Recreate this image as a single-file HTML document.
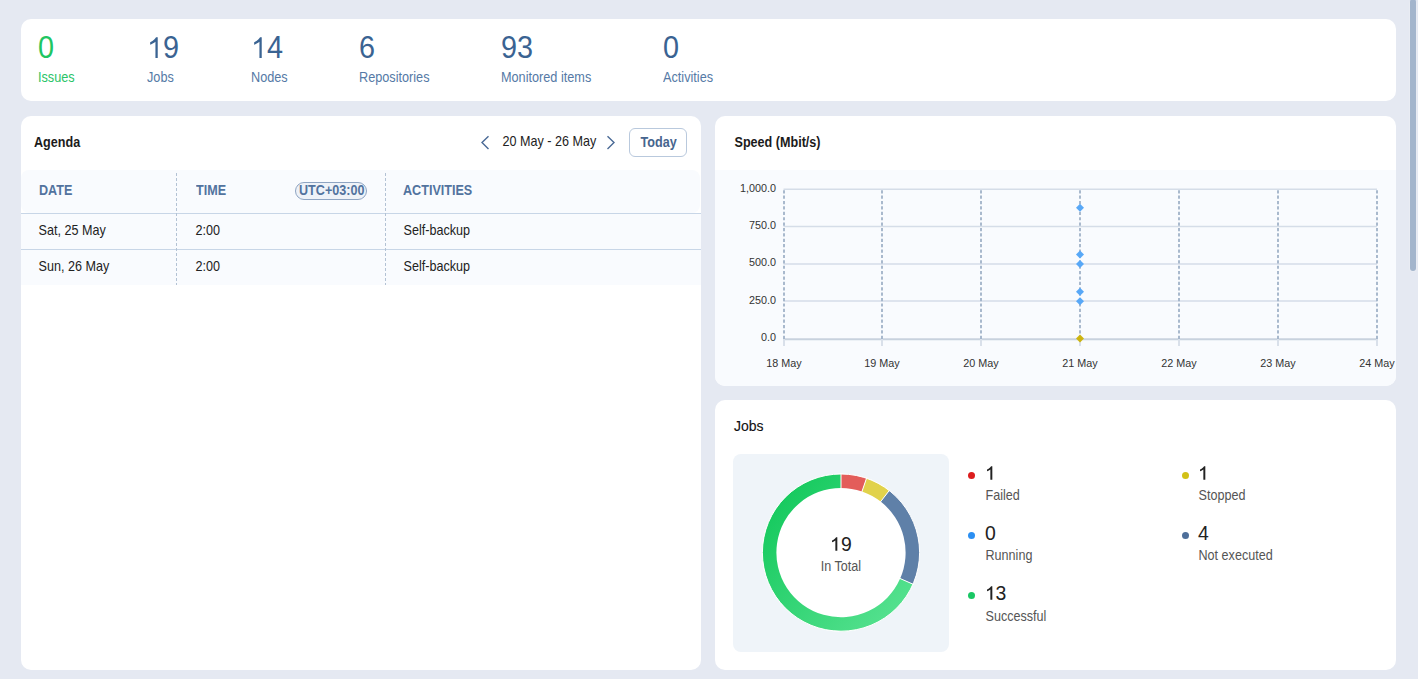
<!DOCTYPE html>
<html>
<head>
<meta charset="utf-8">
<style>
html,body{margin:0;padding:0;}
body{width:1418px;height:679px;overflow:hidden;background:#e5e9f2;font-family:"Liberation Sans",sans-serif;position:relative;}
.a{position:absolute;white-space:nowrap;line-height:1;}
.card{position:absolute;background:#fff;border-radius:10px;overflow:hidden;}
.num{font-size:28.8px;color:#3a6392;transform:scaleY(1.06);transform-origin:0 4.6px;}
.lbl{font-size:12.7px;color:#557aa6;}
.ttl{font-size:12.6px;font-weight:bold;color:#1b1b1b;}
.th{font-size:12.6px;font-weight:bold;color:#52739e;}
.td{font-size:12.6px;color:#222;}
.ax{font-size:10.8px;color:#333;}
.lnum{font-size:19.4px;color:#222;}
.llbl{font-size:12.6px;color:#555;}
.sy{transform:scaleY(1.09);transform-origin:0 2px;}
.one{position:relative;color:transparent;}
.one svg{position:absolute;left:0;top:0;width:100%;height:100%;overflow:visible;}
.dot{position:absolute;width:7px;height:7px;border-radius:50%;margin-top:0px;}
</style>
</head>
<body>
<!-- scrollbar -->
<div style="position:absolute;left:1409px;top:0;width:8px;height:272px;background:#e9ecf3;border-radius:4px;"></div>
<div style="position:absolute;left:1410px;top:-1px;width:6px;height:272px;border-radius:3px;background:#a3b5cc;"></div>

<!-- top stats card -->
<div class="card" style="left:21px;top:19px;width:1375px;height:82px;"></div>
<div class="a num" style="left:38px;top:32.8px;color:#1fc662;">0</div>
<div class="a lbl sy" style="left:38px;top:70.9px;color:#2ac468;">Issues</div>
<div class="a num" style="left:147px;top:32.8px;"><span class="one">1<svg viewBox="0 -1854 1139 2288" preserveAspectRatio="none"><path d="M763 0L600 0L600 -1105Q515 -1035 405 -980Q305 -930 225 -902L225 -1062Q400 -1145 515 -1262Q605 -1345 645 -1409L763 -1409Z" fill="#3a6392"/></svg></span>9</div>
<div class="a lbl sy" style="left:147px;top:70.9px;">Jobs</div>
<div class="a num" style="left:251px;top:32.8px;"><span class="one">1<svg viewBox="0 -1854 1139 2288" preserveAspectRatio="none"><path d="M763 0L600 0L600 -1105Q515 -1035 405 -980Q305 -930 225 -902L225 -1062Q400 -1145 515 -1262Q605 -1345 645 -1409L763 -1409Z" fill="#3a6392"/></svg></span>4</div>
<div class="a lbl sy" style="left:251px;top:70.9px;">Nodes</div>
<div class="a num" style="left:359px;top:32.8px;">6</div>
<div class="a lbl sy" style="left:359px;top:70.9px;">Repositories</div>
<div class="a num" style="left:501px;top:32.8px;">93</div>
<div class="a lbl sy" style="left:501px;top:70.9px;">Monitored items</div>
<div class="a num" style="left:663px;top:32.8px;">0</div>
<div class="a lbl sy" style="left:663px;top:70.9px;">Activities</div>

<!-- agenda card -->
<div class="card" style="left:21px;top:116px;width:680px;height:554px;">
  <div style="position:absolute;left:0;top:54px;width:679px;height:42.5px;background:#f9fbfe;border-radius:8px;"></div>
  <div style="position:absolute;left:0;top:97px;width:680px;height:72px;background:#f9fbfe;"></div>
  <div style="position:absolute;left:0;top:97px;width:680px;height:1px;background:#c8d6e7;"></div>
  <div style="position:absolute;left:0;top:133px;width:680px;height:1px;background:#c8d6e7;"></div>
</div>
<div class="a ttl sy" style="left:34px;top:136.3px;">Agenda</div>
<svg class="a" style="left:478px;top:133px;" width="14" height="18" viewBox="0 0 14 18"><path d="M10.5 3.2 L4 9.6 L10.5 16" fill="none" stroke="#4a6a96" stroke-width="1.4"/></svg>
<div class="a td sy" style="left:502.5px;top:135.3px;">20 May - 26 May</div>
<svg class="a" style="left:604px;top:133px;" width="14" height="18" viewBox="0 0 14 18"><path d="M3.5 3.2 L10 9.6 L3.5 16" fill="none" stroke="#4a6a96" stroke-width="1.4"/></svg>
<div class="a" style="left:629px;top:128px;width:56px;height:27px;border:1px solid #b9c9dd;border-radius:6px;"></div>
<div class="a ttl sy" style="left:640.5px;top:135.8px;color:#46658e;">Today</div>

<svg class="a" style="left:0;top:0;" width="1418" height="679">
  <line x1="176.5" y1="173" x2="176.5" y2="285" stroke="#b3c2d4" stroke-width="1" stroke-dasharray="3 2"/>
  <line x1="385.5" y1="173" x2="385.5" y2="285" stroke="#b3c2d4" stroke-width="1" stroke-dasharray="3 2"/>
</svg>
<div class="a th sy" style="left:39px;top:184.3px;">DATE</div>
<div class="a th sy" style="left:196px;top:184.3px;">TIME</div>
<div class="a" style="left:295px;top:182px;width:70px;height:16px;border:1px solid #8ea4c2;border-radius:9px;background:#eef2f8;"></div>
<div class="a th sy" style="left:299px;top:184.3px;">UTC+03:00</div>
<div class="a th sy" style="left:403px;top:184.3px;">ACTIVITIES</div>

<div class="a td sy" style="left:38.5px;top:224.3px;">Sat, 25 May</div>
<div class="a td sy" style="left:195.5px;top:224.3px;">2:00</div>
<div class="a td sy" style="left:403.5px;top:224.3px;">Self-backup</div>
<div class="a td sy" style="left:38.5px;top:260.3px;">Sun, 26 May</div>
<div class="a td sy" style="left:195.5px;top:260.3px;">2:00</div>
<div class="a td sy" style="left:403.5px;top:260.3px;">Self-backup</div>

<!-- speed card -->
<div class="card" style="left:715px;top:116px;width:681px;height:270px;">
  <div style="position:absolute;left:0;top:54px;width:681px;height:216px;background:#f9fbfe;"></div>
</div>
<div class="a ttl sy" style="left:734.5px;top:136px;">Speed (Mbit/s)</div>
<svg class="a" style="left:0;top:0;" width="1418" height="679">
  <g stroke="#d5dde8" stroke-width="1.5">
    <line x1="783.5" y1="189.3" x2="1377" y2="189.3"/>
    <line x1="783.5" y1="226.4" x2="1377" y2="226.4"/>
    <line x1="783.5" y1="264.1" x2="1377" y2="264.1"/>
    <line x1="783.5" y1="301" x2="1377" y2="301"/>
  </g>
  <line x1="783.5" y1="339.2" x2="1377" y2="339.2" stroke="#c8d2de" stroke-width="2"/>
  <g stroke="#d9e0ea" stroke-width="2">
    <line x1="784" y1="339" x2="784" y2="346"/>
    <line x1="882" y1="339" x2="882" y2="346"/>
    <line x1="981" y1="339" x2="981" y2="346"/>
    <line x1="1080" y1="339" x2="1080" y2="346"/>
    <line x1="1179" y1="339" x2="1179" y2="346"/>
    <line x1="1278" y1="339" x2="1278" y2="346"/>
    <line x1="1377" y1="339" x2="1377" y2="346"/>
  </g>
  <g stroke="#a0b2c8" stroke-width="1.8" stroke-dasharray="3.2 2.19" stroke-dashoffset="4.69">
    <line x1="784" y1="189.5" x2="784" y2="339.5"/>
    <line x1="882" y1="189.5" x2="882" y2="339.5"/>
    <line x1="981" y1="189.5" x2="981" y2="339.5"/>
    <line x1="1080" y1="189.5" x2="1080" y2="339.5"/>
    <line x1="1179" y1="189.5" x2="1179" y2="339.5"/>
    <line x1="1278" y1="189.5" x2="1278" y2="339.5"/>
    <line x1="1377" y1="189.5" x2="1377" y2="339.5"/>
  </g>
  <g fill="#58a8f7">
    <path d="M1080 203.8 L1084 207.8 L1080 211.8 L1076 207.8 Z"/>
    <path d="M1080 250.6 L1084 254.6 L1080 258.6 L1076 254.6 Z"/>
    <path d="M1080 260 L1084 264 L1080 268 L1076 264 Z"/>
    <path d="M1080 287.8 L1084 291.8 L1080 295.8 L1076 291.8 Z"/>
    <path d="M1080 297.2 L1084 301.2 L1080 305.2 L1076 301.2 Z"/>
  </g>
  <path d="M1080 334.5 L1084 338.5 L1080 342.5 L1076 338.5 Z" fill="#cdb40f"/>
</svg>
<div class="a ax" style="left:700px;width:76px;text-align:right;top:183.2px;">1,000.0</div>
<div class="a ax" style="left:700px;width:76px;text-align:right;top:219.8px;">750.0</div>
<div class="a ax" style="left:700px;width:76px;text-align:right;top:257.2px;">500.0</div>
<div class="a ax" style="left:700px;width:76px;text-align:right;top:294.6px;">250.0</div>
<div class="a ax" style="left:700px;width:76px;text-align:right;top:332px;">0.0</div>
<div class="a ax" style="left:744.0px;width:80px;text-align:center;top:357.8px;">18 May</div>
<div class="a ax" style="left:842.0px;width:80px;text-align:center;top:357.8px;">19 May</div>
<div class="a ax" style="left:941.0px;width:80px;text-align:center;top:357.8px;">20 May</div>
<div class="a ax" style="left:1040.0px;width:80px;text-align:center;top:357.8px;">21 May</div>
<div class="a ax" style="left:1139.0px;width:80px;text-align:center;top:357.8px;">22 May</div>
<div class="a ax" style="left:1238.0px;width:80px;text-align:center;top:357.8px;">23 May</div>
<div class="a ax" style="left:1337.0px;width:80px;text-align:center;top:357.8px;">24 May</div>

<!-- jobs card -->
<div class="card" style="left:715px;top:400px;width:681px;height:270px;"></div>
<div class="a ttl sy" style="left:734px;top:418.1px;font-size:14px;font-weight:normal;color:#111;-webkit-text-stroke:0.12px #111;">Jobs</div>
<div class="a" style="left:733px;top:454px;width:216px;height:198px;border-radius:8px;background:#eff4f9;"></div>
<svg class="a" style="left:0;top:0;" width="1418" height="679">
  <defs>
    <linearGradient id="gg" x1="910" y1="600" x2="770" y2="480" gradientUnits="userSpaceOnUse">
      <stop offset="0" stop-color="#55e18f"/>
      <stop offset="1" stop-color="#0fc759"/>
    </linearGradient>
  </defs>
  <circle cx="841.0" cy="552.6" r="79" fill="#fff"/>
  <g id="donut">
  <path d="M841.00 474.00 A78.6 78.6 0 0 1 866.52 478.26 L861.98 491.50 A64.6 64.6 0 0 0 841.00 488.00 Z" fill="#e35d5a"/>
  <path d="M866.52 478.26 A78.6 78.6 0 0 1 889.28 490.57 L880.68 501.62 A64.6 64.6 0 0 0 861.98 491.50 Z" fill="#e1d24b"/>
  <path d="M889.28 490.57 A78.6 78.6 0 0 1 912.98 584.17 L900.16 578.55 A64.6 64.6 0 0 0 880.68 501.62 Z" fill="#5f80a8"/>
  <path d="M912.98 584.17 A78.6 78.6 0 1 1 841.00 474.00 L841.00 488.00 A64.6 64.6 0 1 0 900.16 578.55 Z" fill="url(#gg)"/>
  <line x1="841.00" y1="489.00" x2="841.00" y2="473.00" stroke="#fff" stroke-width="1"/>
  <line x1="861.65" y1="492.45" x2="866.85" y2="477.31" stroke="#fff" stroke-width="1"/>
  <line x1="880.06" y1="502.41" x2="889.89" y2="489.78" stroke="#fff" stroke-width="1"/>
  <line x1="899.24" y1="578.15" x2="913.90" y2="584.57" stroke="#fff" stroke-width="1"/>
  <circle cx="841.0" cy="552.6" r="78.6" fill="none" stroke="#fff" stroke-width="1"/>
  </g>
</svg>
<div class="a lnum" style="left:830.2px;top:534.5px;width:21px;text-align:center;"><span class="one">1<svg viewBox="0 -1854 1139 2288" preserveAspectRatio="none"><path d="M773 0L565 0L565 -1085Q495 -1025 405 -975Q305 -925 215 -895L215 -1075Q390 -1150 505 -1262Q595 -1345 640 -1409L773 -1409Z" fill="#222"/></svg></span>9</div>
<div class="a llbl sy" style="left:801px;top:560.2px;width:80px;text-align:center;">In Total</div>

<div class="dot" style="left:968px;top:471.5px;background:#dc1d1d;"></div>
<div class="a lnum" style="left:985px;top:463.5px;"><span class="one">1<svg viewBox="0 -1854 1139 2288" preserveAspectRatio="none"><path d="M773 0L565 0L565 -1085Q495 -1025 405 -975Q305 -925 215 -895L215 -1075Q390 -1150 505 -1262Q595 -1345 640 -1409L773 -1409Z" fill="#222"/></svg></span></div>
<div class="a llbl sy" style="left:985.5px;top:489.2px;">Failed</div>
<div class="dot" style="left:968px;top:531.5px;background:#2c8ff2;"></div>
<div class="a lnum" style="left:985px;top:523.5px;">0</div>
<div class="a llbl sy" style="left:985.5px;top:549.2px;">Running</div>
<div class="dot" style="left:968px;top:592px;background:#19c764;"></div>
<div class="a lnum" style="left:984.6px;top:583.5px;"><span class="one">1<svg viewBox="0 -1854 1139 2288" preserveAspectRatio="none"><path d="M773 0L565 0L565 -1085Q495 -1025 405 -975Q305 -925 215 -895L215 -1075Q390 -1150 505 -1262Q595 -1345 640 -1409L773 -1409Z" fill="#222"/></svg></span>3</div>
<div class="a llbl sy" style="left:985.5px;top:609.8px;">Successful</div>
<div class="dot" style="left:1181.5px;top:471.5px;background:#d2c117;"></div>
<div class="a lnum" style="left:1198px;top:463.5px;"><span class="one">1<svg viewBox="0 -1854 1139 2288" preserveAspectRatio="none"><path d="M773 0L565 0L565 -1085Q495 -1025 405 -975Q305 -925 215 -895L215 -1075Q390 -1150 505 -1262Q595 -1345 640 -1409L773 -1409Z" fill="#222"/></svg></span></div>
<div class="a llbl sy" style="left:1198.5px;top:489.2px;">Stopped</div>
<div class="dot" style="left:1181.5px;top:531.5px;background:#4e6f9a;"></div>
<div class="a lnum" style="left:1198px;top:523.5px;">4</div>
<div class="a llbl sy" style="left:1198.5px;top:549.2px;">Not executed</div>
</body>
</html>
